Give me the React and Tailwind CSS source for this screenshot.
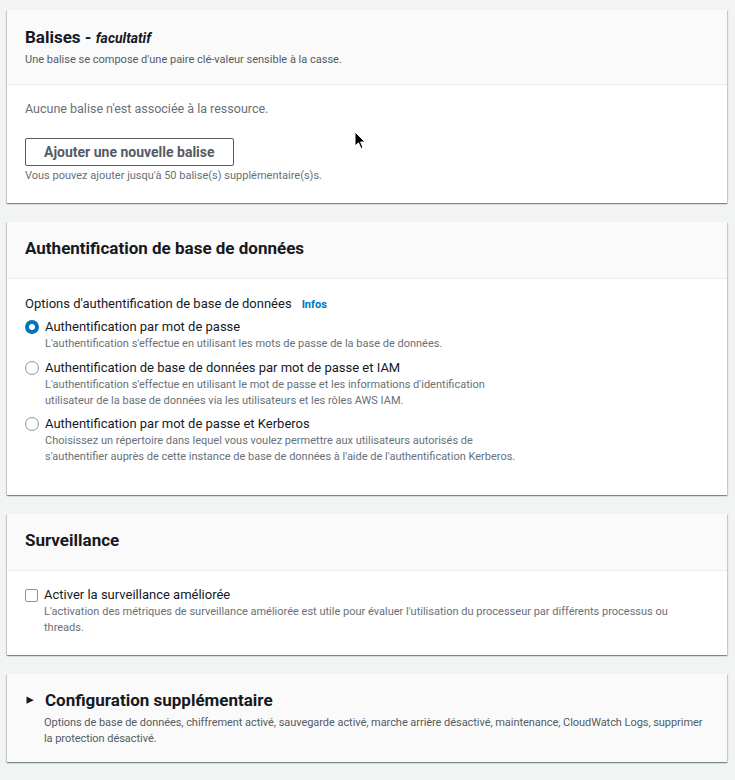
const cardShadow =
  "shadow-[0_1px_1px_0_rgba(0,28,36,0.3),1px_1px_1px_0_rgba(0,28,36,0.15),-1px_1px_1px_0_rgba(0,28,36,0.15)]";

const Card = ({ children }) => (
  <div className={"bg-white " + cardShadow}>{children}</div>
);

const CardHeader = ({ children, className = "pt-[15px] pb-[19px]" }) => (
  <div className={"bg-[#fafafa] border-b border-[#eaeded] px-[18px] " + className}>
    {children}
  </div>
);

const Title = ({ children }) => (
  <h2 className="text-[17px] leading-[22px] font-bold text-[#16191f]">{children}</h2>
);

const Radio = ({ checked, label, description }) => (
  <div className="flex items-start gap-[6px]">
    {checked ? (
      <span className="mt-[2px] h-[14px] w-[14px] shrink-0 rounded-full border-[4px] border-[#0073bb] bg-white" />
    ) : (
      <span className="mt-[2px] h-[14px] w-[14px] shrink-0 rounded-full border border-[#879596] bg-white" />
    )}
    <div>
      <div className="text-[13px] leading-[18px] text-[#16191f]">{label}</div>
      <div className="max-w-[485px] text-[11px] leading-[16px] text-[#687078]">
        {description}
      </div>
    </div>
  </div>
);

const authOptions = [
  {
    checked: true,
    label: "Authentification par mot de passe",
    description:
      "L'authentification s'effectue en utilisant les mots de passe de la base de données.",
  },
  {
    checked: false,
    label: "Authentification de base de données par mot de passe et IAM",
    description:
      "L'authentification s'effectue en utilisant le mot de passe et les informations d'identification utilisateur de la base de données via les utilisateurs et les rôles AWS IAM.",
  },
  {
    checked: false,
    label: "Authentification par mot de passe et Kerberos",
    description:
      "Choisissez un répertoire dans lequel vous voulez permettre aux utilisateurs autorisés de s'authentifier auprès de cette instance de base de données à l'aide de l'authentification Kerberos.",
  },
];

const App = () => {
  return (
    <div className="relative min-h-[780px] bg-[#f2f3f3] pl-[7px] pr-[8px] pt-[10px] pb-[17px] font-['Roboto',sans-serif]">
      <div className="flex flex-col gap-[19px]">
        {/* Balises */}
        <Card>
          <CardHeader className="pt-[16px] pb-[16px]">
            <Title>
              Balises - <i className="text-[14px]">facultatif</i>
            </Title>
            <p className="mt-[3px] text-[11px] leading-[16px] text-[#545b64]">
              Une balise se compose d'une paire clé-valeur sensible à la casse.
            </p>
          </CardHeader>
          <div className="px-[18px] pt-[13px] pb-[19px]">
            <p className="text-[12.5px] leading-[22px] text-[#687078]">
              Aucune balise n'est associée à la ressource.
            </p>
            <button className="mt-[18px] h-[28px] rounded-[2px] border border-[#545b64] bg-white px-[18px] text-[14px] font-bold text-[#545b64]">
              Ajouter une nouvelle balise
            </button>
            <p className="mt-[2px] text-[11px] leading-[16px] text-[#687078]">
              Vous pouvez ajouter jusqu'à 50 balise(s) supplémentaire(s)s.
            </p>
          </div>
        </Card>

        {/* Authentification */}
        <Card>
          <CardHeader>
            <Title>Authentification de base de données</Title>
          </CardHeader>
          <div className="px-[18px] pt-[15px] pb-[30px]">
            <div className="flex items-baseline text-[13px] leading-[20px] text-[#16191f]">
              Options d'authentification de base de données
              <span className="ml-[10px] text-[11px] font-bold text-[#0073bb]">Infos</span>
            </div>
            <div className="mt-[3px] flex flex-col gap-[6.5px]">
              {authOptions.map((opt, i) => (
                <Radio key={i} {...opt} />
              ))}
            </div>
          </div>
        </Card>

        {/* Surveillance */}
        <Card>
          <CardHeader>
            <Title>Surveillance</Title>
          </CardHeader>
          <div className="px-[18px] pt-[15px] pb-[19px]">
            <div className="flex items-start gap-[6px]">
              <span className="mt-[3px] h-[13px] w-[13px] shrink-0 rounded-[2px] border border-[#879596] bg-white" />
              <div>
                <div className="text-[13px] leading-[18px] text-[#16191f]">
                  Activer la surveillance améliorée
                </div>
                <div className="max-w-[640px] text-[11px] leading-[16px] text-[#687078]">
                  L'activation des métriques de surveillance améliorée est utile pour évaluer
                  l'utilisation du processeur par différents processus ou threads.
                </div>
              </div>
            </div>
          </div>
        </Card>

        {/* Configuration supplémentaire */}
        <div className={"bg-[#fafafa] px-[18px] pt-[15px] pb-[15px] " + cardShadow}>
          <div className="flex items-center">
            <svg width="20" height="22" viewBox="0 0 20 22" className="shrink-0">
              <path d="M1.5 7.6 L8.8 11.2 L1.5 14.8 Z" fill="#16191f" />
            </svg>
            <Title>Configuration supplémentaire</Title>
          </div>
          <p className="mt-[3.5px] pl-[19px] text-[11px] leading-[16px] tracking-[-0.05px] text-[#545b64]">
            Options de base de données, chiffrement activé, sauvegarde activé, marche arrière
            désactivé, maintenance, CloudWatch Logs, supprimer la protection désactivé.
          </p>
        </div>
      </div>

      {/* mouse pointer */}
      <svg
        width="13"
        height="20"
        viewBox="0 0 13 20"
        className="absolute left-[354px] top-[131px]"
      >
        <path
          d="M1 1 L1 15 L4.5 11.8 L7 17.5 L9 16.6 L6.6 11 L11 11 Z"
          fill="#000"
          stroke="#fff"
          strokeWidth="1"
          strokeLinejoin="round"
        />
      </svg>
    </div>
  );
};

export default App;
